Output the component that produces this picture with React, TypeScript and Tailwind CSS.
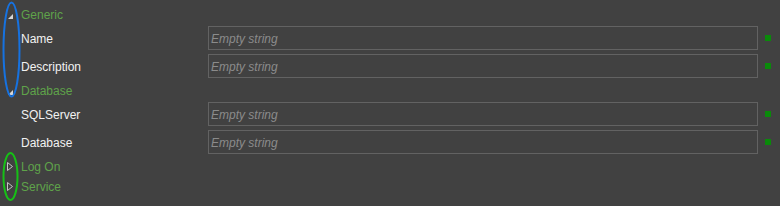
import React from 'react';

type Row = { label: string };
type Group = { title: string; open: boolean; rows: Row[] };

const groups: Group[] = [
  { title: 'Generic', open: true, rows: [{ label: 'Name' }, { label: 'Description' }] },
  { title: 'Database', open: true, rows: [{ label: 'SQLServer' }, { label: 'Database' }] },
  { title: 'Log On', open: false, rows: [] },
  { title: 'Service', open: false, rows: [] },
];

function Arrow({ open }: { open: boolean }) {
  if (open) {
    return (
      <svg width="21" height="20" viewBox="0 0 21 20" className="shrink-0">
        <path d="M8 15 L13 10 L13 15 Z" fill="#d6d6d6" />
      </svg>
    );
  }
  return (
    <svg width="21" height="20" viewBox="0 0 21 20" className="shrink-0">
      <path d="M7.5 6.5 L12.5 10.5 L7.5 14.5 Z" fill="none" stroke="#c4c4c4" strokeWidth="1" />
    </svg>
  );
}

export default function App() {
  return (
    <div
      className="relative h-[206px] w-[780px] overflow-hidden bg-[#414141] pt-1 text-[12px]"
      style={{ fontFamily: '"Segoe UI", "Liberation Sans", Arial, sans-serif' }}
    >
      {groups.map((g) => (
        <div key={g.title}>
          {/* group header */}
          <div className="flex h-5 items-center">
            <Arrow open={g.open} />
            <span className="pt-[2px] text-[#5fa34a]">{g.title}</span>
          </div>
          {g.open &&
            g.rows.map((r) => (
              <div key={r.label} className="flex h-7 items-center">
                <span className="w-[208px] pl-[21px] pt-[1px] text-[#f2f2f2]">{r.label}</span>
                <div className="flex h-6 w-[550px] items-center border border-[#626262] px-[2px] pt-[1px]">
                  <span className="italic text-[#8b8b8b]">Empty string</span>
                </div>
                <div className="ml-[7px] h-[6px] w-[6px] bg-[#0a8a0a]" />
              </div>
            ))}
        </div>
      ))}

      {/* annotation marks */}
      <svg className="pointer-events-none absolute left-0 top-0" width="40" height="206">
        <ellipse cx="11.5" cy="49.5" rx="8" ry="47" fill="none" stroke="#1672e0" strokeWidth="2" />
        <ellipse cx="10.5" cy="176.5" rx="7" ry="23.5" fill="none" stroke="#16c016" strokeWidth="2" />
      </svg>
    </div>
  );
}
